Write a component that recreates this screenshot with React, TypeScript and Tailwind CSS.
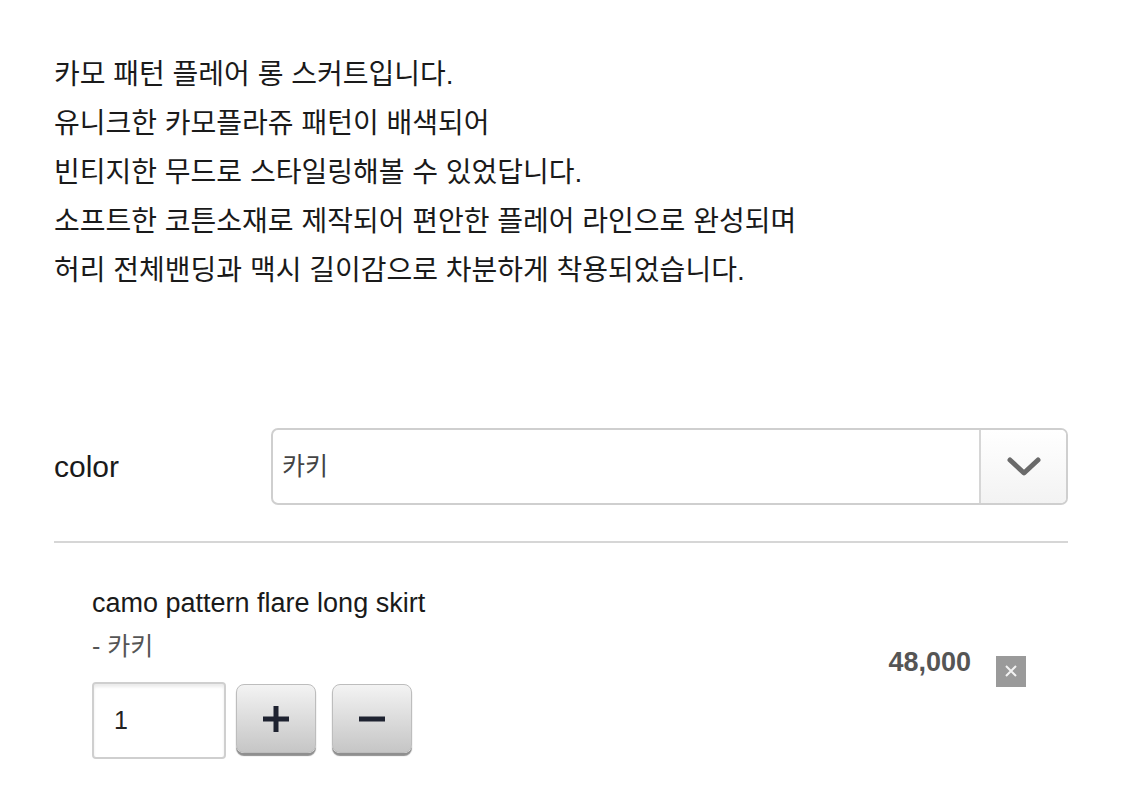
import { useState } from "react";

const font = {
  fontFamily: '"Liberation Sans", "Noto Sans CJK KR", sans-serif',
};

const lines = [
  "카모 패턴 플레어 롱 스커트입니다.",
  "유니크한 카모플라쥬 패턴이 배색되어",
  "빈티지한 무드로 스타일링해볼 수 있었답니다.",
  "소프트한 코튼소재로 제작되어 편안한 플레어 라인으로 완성되며",
  "허리 전체밴딩과 맥시 길이감으로 차분하게 착용되었습니다.",
];

const QtyButton = ({ children }: { children: React.ReactNode }) => (
  <button className="flex h-[69px] w-[80px] items-center justify-center rounded-[8px] border border-[#bdbdbd] bg-gradient-to-b from-[#f3f3f3] to-[#c6c6c6] shadow-[0_3px_1px_#8f8f8f]">
    {children}
  </button>
);

export default function App() {
  const [qty, setQty] = useState(1);

  return (
    <div className="min-h-[812px] bg-white text-[#222]" style={font}>
      <div className="pl-[54px] pr-[57px] pt-[50px]">
        <div className="text-[28px] leading-[49px] text-[#1a1a1a]">
          {lines.map((l) => (
            <p key={l}>{l}</p>
          ))}
        </div>

        <div className="mt-[133px] flex items-center">
          <div className="w-[217px] text-[30px] text-[#1a1a1a]">color</div>
          <div className="flex h-[77px] flex-1 items-stretch overflow-hidden rounded-[7px] border-2 border-[#cfcfcf]">
            <div className="flex flex-1 items-center pl-[9px] text-[25px] text-[#444]">카키</div>
            <div className="flex w-[87px] items-center justify-center border-l-2 border-[#d6d6d6] bg-gradient-to-b from-white to-[#f3f3f3]">
              <svg width="36" height="22" viewBox="0 0 36 22" fill="none">
                <path d="M4 4l14 13L32 4" stroke="#6a6a6a" strokeWidth="5" strokeLinecap="round" strokeLinejoin="round" />
              </svg>
            </div>
          </div>
        </div>

        <div className="mt-[36px] h-[2px] bg-[#d6d6d6]" />

        <div className="flex items-center pl-[38px] pr-[42px] pt-[40px]">
          <div className="flex flex-1 flex-col">
            <div className="text-[27px] leading-[40px] text-[#1a1a1a]">camo pattern flare long skirt</div>
            <div className="mt-[3px] text-[25px] leading-[40px] text-[#555]">- 카키</div>
            <div className="mt-[16px] flex items-center">
              <div className="flex h-[77px] w-[134px] items-center rounded-[4px] border-2 border-[#cfcfcf] pl-[20px] text-[25px] text-[#222] shadow-[inset_0_3px_3px_rgba(0,0,0,0.08)]">
                {qty}
              </div>
              <div className="ml-[10px] mb-[4px] flex items-center gap-[16px]" onClick={() => setQty(qty)}>
                <QtyButton>
                  <svg width="28" height="28" viewBox="0 0 28 28">
                    <path d="M14 1v26M1 14h26" stroke="#1e2230" strokeWidth="5" />
                  </svg>
                </QtyButton>
                <QtyButton>
                  <svg width="28" height="28" viewBox="0 0 28 28">
                    <path d="M1 14h26" stroke="#1e2230" strokeWidth="5" />
                  </svg>
                </QtyButton>
              </div>
            </div>
          </div>
          <div className="flex items-center gap-[25px]">
            <div className="mb-[18px] text-[27px] font-bold text-[#555]">48,000</div>
            <div className="flex h-[31px] w-[30px] items-center justify-center bg-[#9a9a9a]">
              <svg width="16" height="16" viewBox="0 0 16 16">
                <path d="M3 3l10 10M13 3L3 13" stroke="#f2f2f2" strokeWidth="2" />
              </svg>
            </div>
          </div>
        </div>
      </div>
    </div>
  );
}
